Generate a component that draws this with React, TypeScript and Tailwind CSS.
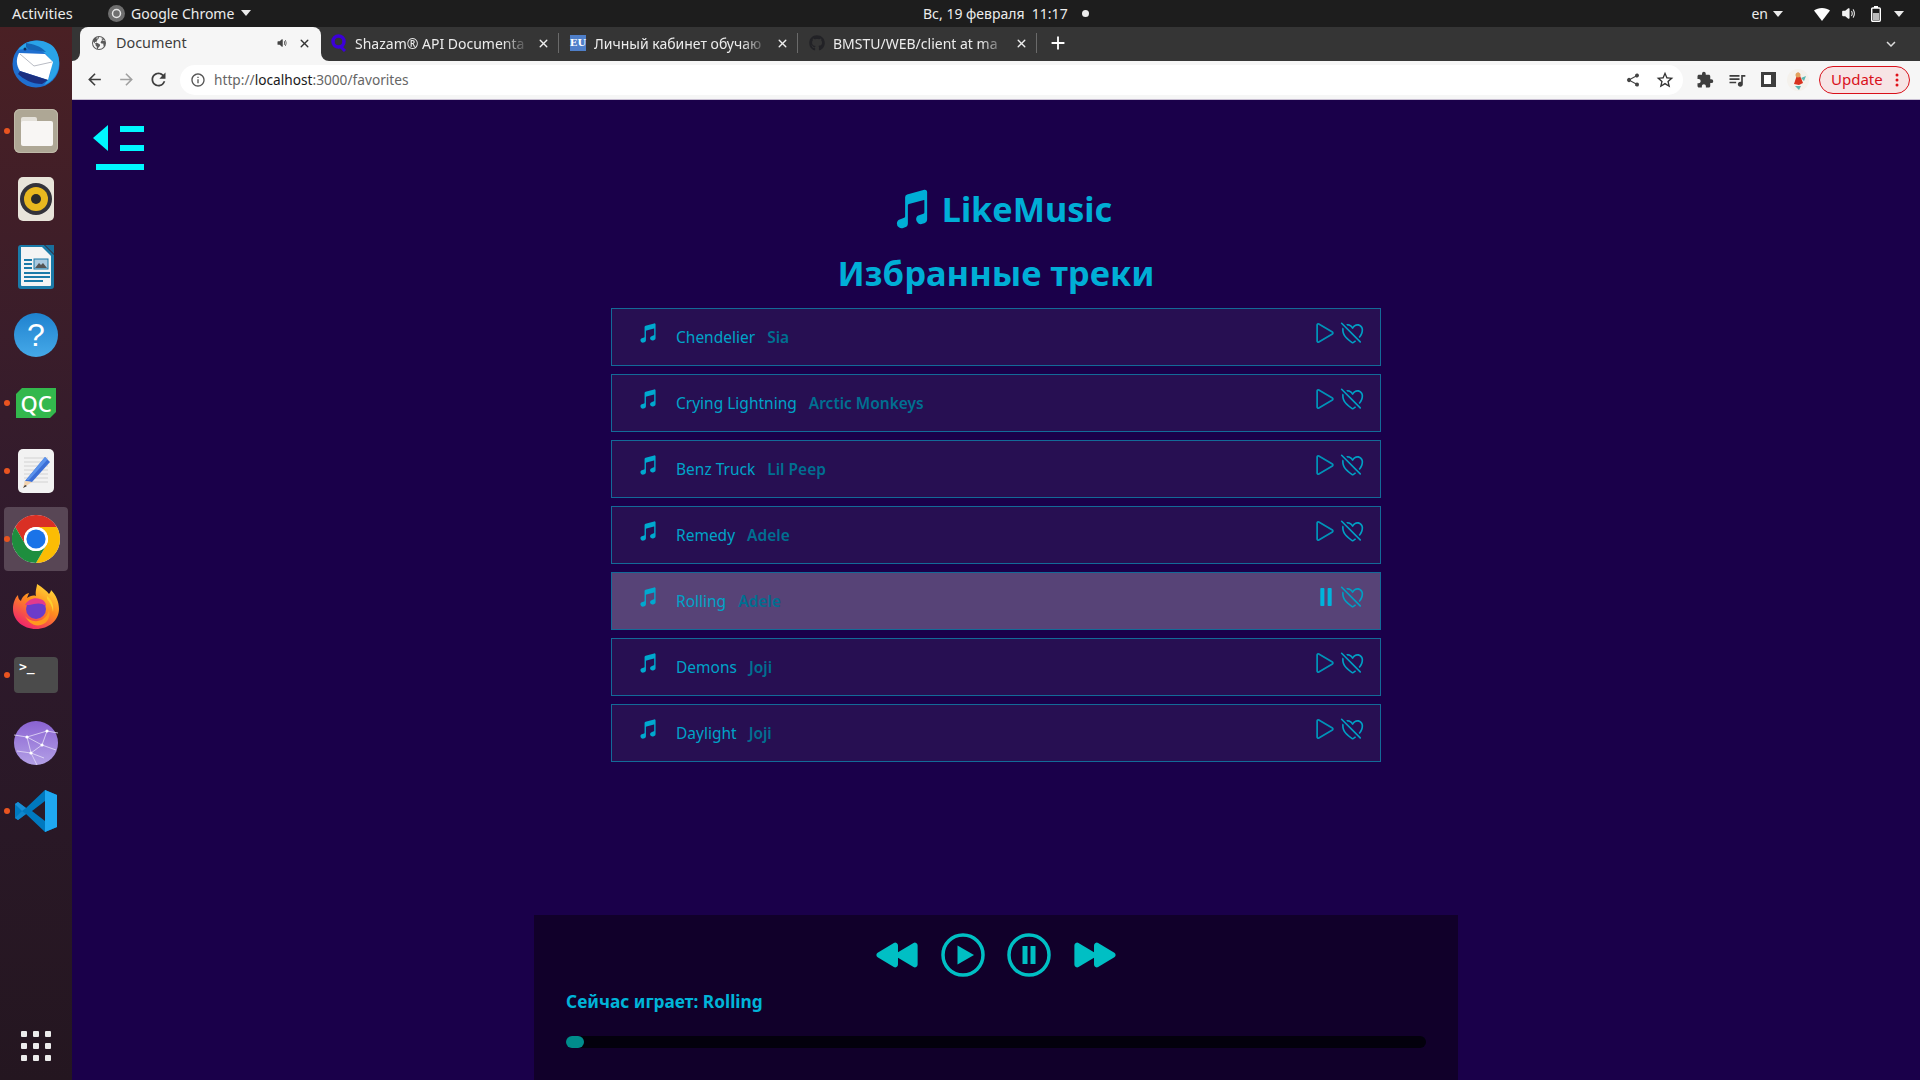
import React from "react";
import {
  IoMusicalNotes, IoPlayOutline, IoHeartDislikeOutline, IoPause, IoPlayBack, IoPlayForward,
  IoShareSocial, IoEarth, IoClose, IoVolumeMedium,
} from "react-icons/io5";
import { MdArrowBack, MdArrowForward, MdRefresh, MdInfoOutline, MdExtension, MdOutlineQueueMusic, MdExpandMore, MdAdd, MdOutlineStarBorder } from "react-icons/md";
import { FaGithub } from "react-icons/fa";

const tracks = [
  ["Chendelier", "Sia"],
  ["Crying Lightning", "Arctic Monkeys"],
  ["Benz Truck", "Lil Peep"],
  ["Remedy", "Adele"],
  ["Rolling", "Adele"],
  ["Demons", "Joji"],
  ["Daylight", "Joji"],
];

const Caret = ({ className = "" }: { className?: string }) => (
  <svg width="10" height="6" viewBox="0 0 10 6" className={className}><path d="M0 0h10L5 6z" fill="#ececec" /></svg>
);

const Dot = () => <span className="absolute left-[4px] top-1/2 -mt-[3px] h-[6px] w-[6px] rounded-full bg-[#e95420]" />;

function Thunderbird() {
  return (
    <svg width="48" height="50" viewBox="0 0 48 50">
      <circle cx="24" cy="26" r="23.5" fill="#1f6fd0" />
      <path d="M6 12C12 3 26 -1 38 6c8 5 11 16 8 26-2 7-8 13-14 15 5-6 9-14 6-24C35 14 26 10 16 11c-4 0-7 0-10 1z" fill="#2aa3e8" />
      <path d="M14 5c7 1 15 3 20 9l-14-2c-3 0-5-1-6-3z" fill="#1565b5" />
      <path d="M7 15 33 16 41 24 36 42 8 33C4 27 4 21 7 15z" fill="#fff" />
      <path d="M8 16 22 28 40 24" fill="none" stroke="#b9bcc4" strokeWidth="1" />
      <path d="M6 36c5 5 14 10 24 10l6-4L8 33z" fill="#1b2f80" />
      <circle cx="13" cy="11" r="1.5" fill="#0c2c5c" />
    </svg>
  );
}

function Files() {
  return (
    <div className="relative h-[44px] w-[44px] rounded-[6px] bg-[#aea795] shadow-[inset_0_0_0_1px_#bfb9a8]">
      <div className="absolute left-[7px] top-[8px] h-[8px] w-[16px] rounded-t-[2px] bg-[#e4e1da]" />
      <div className="absolute left-[7px] top-[12px] h-[25px] w-[32px] rounded-[2px] bg-[#f8f6f4]" />
    </div>
  );
}

function Rhythmbox() {
  return (
    <div className="flex h-[44px] w-[36px] items-center justify-center rounded-[5px] bg-[#e8e4da]">
      <div className="flex h-[32px] w-[32px] items-center justify-center rounded-full bg-[#33333a]">
        <div className="flex h-[24px] w-[24px] items-center justify-center rounded-full bg-[#e9b81f]">
          <div className="h-[10px] w-[10px] rounded-full bg-[#2a2a2a]" />
        </div>
      </div>
    </div>
  );
}

function Writer() {
  return (
    <svg width="36" height="46" viewBox="0 0 36 46">
      <path d="M3 1h23l10 10v31a3 3 0 0 1-3 3H3a3 3 0 0 1-3-3V4a3 3 0 0 1 3-3z" fill="#1a7aa8" />
      <path d="M3 3h21l9 9v29a1 1 0 0 1-1 1H4a1 1 0 0 1-1-1z" fill="#f4f4f4" />
      <path d="M27 1h9v9z" fill="#1a6f9c" />
      <path d="M6 15h8v2H6zM6 19h8v2H6zM6 23h8v2H6zM6 28h26v2H6zM6 32h26v2H6zM6 36h19v2H6z" fill="#1a7aa8" />
      <rect x="16" y="15" width="14" height="10" fill="#a9c9e0" stroke="#1a7aa8" />
      <path d="M17 24l4-5 2 2 2-2 4 5z" fill="#555" />
    </svg>
  );
}

function Help() {
  return (
    <div className="flex h-[44px] w-[44px] items-center justify-center rounded-full bg-gradient-to-b from-[#1e82cf] to-[#45a9e8] font-['Liberation_Sans',sans-serif] text-[32px] leading-none text-white">?</div>
  );
}

function QC() {
  return (
    <div className="flex h-[30px] w-[40px] items-center justify-center bg-[#33b84d] font-['Noto_Sans',sans-serif] text-[22px] font-medium leading-none text-white [clip-path:polygon(6px_0,100%_0,100%_calc(100%-6px),calc(100%-6px)_100%,0_100%,0_6px)]">QC</div>
  );
}

function Pencil() {
  return (
    <svg width="36" height="44" viewBox="0 0 36 44">
      <rect width="36" height="44" rx="5" fill="#f2f2f2" />
      <path d="M6 9h24M6 13h24M6 17h24M6 21h24M6 25h24M6 29h24M6 33h24" stroke="#d2d2d2" strokeWidth="1" />
      <path d="M27 8l5 5-18 20-7-1z" fill="#3c6fd6" />
      <path d="M27 8l2.5 2.5L11 31l-3 0z" fill="#5c93ec" />
      <path d="M7 32l7 1-9 6z" fill="#f3d3ae" />
      <path d="M5 39l2-3 2 1z" fill="#333" />
    </svg>
  );
}

function Chrome() {
  return (
    <svg width="48" height="48" viewBox="0 0 48 48">
      <circle cx="24" cy="24" r="24" fill="#fff" />
      <path d="M3.2 12A24 24 0 0 1 44.78 12H24a12 12 0 0 0-10.4 18z" fill="#d93025" />
      <path d="M44.78 12A24 24 0 0 1 24 48l10.4-18A12 12 0 0 0 24 12z" fill="#fbbc04" />
      <path d="M24 48A24 24 0 0 1 3.2 12L13.6 30a12 12 0 0 0 20.8 0z" fill="#1e8e3e" />
      <circle cx="24" cy="24" r="12" fill="#fff" />
      <circle cx="24" cy="24" r="9.6" fill="#1a73e8" />
    </svg>
  );
}

function Firefox() {
  return (
    <svg width="46" height="46" viewBox="0 0 46 46">
      <defs>
        <linearGradient id="ff1" x1="0.8" y1="0" x2="0.2" y2="1">
          <stop offset="0" stopColor="#ffe03a" />
          <stop offset="0.45" stopColor="#ff8a1f" />
          <stop offset="1" stopColor="#ee1a73" />
        </linearGradient>
      </defs>
      <path d="M23 45C10 45 0 36 0 25 0 19 2 14 5 11c0 3 1 5 3 6 1-4 4-7 8-8l-2 5c3-2 6-3 9-2C22 7 24 3 24 0c6 4 10 7 12 10 1-1 2-3 2-4 5 5 8 12 8 19 0 11-10 20-23 20z" fill="url(#ff1)" />
      <circle cx="23" cy="25" r="10" fill="#6b3cc9" />
      <path d="M12 21c3-6 10-8 15-6 4 1 6 4 6 7-4-3-8-3-12-2-3 1-6 1-9 1z" fill="#e23a8d" />
      <path d="M12 32c4 5 12 7 18 3 3-2 5-5 6-9 2 6-1 13-8 15-7 2-13-3-16-9z" fill="#ff9a1e" />
      <path d="M34 12c5 4 7 9 6 16-1-6-3-10-6-13z" fill="#ffd02e" />
    </svg>
  );
}

function Terminal() {
  return (
    <div className="flex h-[36px] w-[44px] rounded-[4px] bg-[#4b4b4b] pl-[5px] pt-[3px] font-['DejaVu_Sans_Mono',monospace] text-[13px] font-bold leading-[14px] text-white">&gt;_</div>
  );
}

function Globe() {
  return (
    <svg width="44" height="44" viewBox="0 0 44 44">
      <defs>
        <linearGradient id="g1" x1="0" y1="0" x2="0" y2="1">
          <stop offset="0" stopColor="#8a63d2" />
          <stop offset="1" stopColor="#b3a0e6" />
        </linearGradient>
      </defs>
      <circle cx="22" cy="22" r="22" fill="url(#g1)" />
      <path d="M0 14l13 2 20-6 11 2M13 16l15 8 14 5M13 16l4 16 6 12M33 10l-5 14-11 8-14-2M17 32l13 5" fill="none" stroke="#e6def8" strokeWidth="0.8" />
      <circle cx="13" cy="16" r="1.6" fill="#fff" /><circle cx="33" cy="10" r="1.6" fill="#fff" /><circle cx="28" cy="24" r="1.6" fill="#fff" /><circle cx="17" cy="32" r="1.6" fill="#fff" />
    </svg>
  );
}

function VSCode() {
  return (
    <svg width="44" height="44" viewBox="0 0 44 44">
      <path d="M31 1 12 19 4 13 1 15v14l3 2 8-6 19 18 12-5V6z" fill="#0079bf" />
      <path d="M31 1 43 6v32l-12 5z" fill="#1fa8f1" />
      <path d="M31 12 18 22l13 10z" fill="#2b1a26" />
      <path d="M1 15l3-2 8 6-4 3z" fill="#1a8fd6" />
      <path d="M1 29l3 2 8-6-4-3z" fill="#0f86cc" />
    </svg>
  );
}

const dock: [React.ReactNode, boolean][] = [
  [<Thunderbird />, false],
  [<Files />, true],
  [<Rhythmbox />, false],
  [<Writer />, false],
  [<Help />, false],
  [<QC />, true],
  [<Pencil />, true],
  [<Chrome />, true],
  [<Firefox />, false],
  [<Terminal />, true],
  [<Globe />, false],
  [<VSCode />, true],
];

function Dock() {
  return (
    <div className="flex h-full w-[72px] shrink-0 flex-col bg-gradient-to-b from-[#4a2024] via-[#2f1a2d] to-[#241620] pt-[2px]">
      {dock.map(([icon, dot], i) => (
        <div key={i} className="relative flex h-[68px] items-center justify-center">
          {i === 7 && <div className="absolute inset-x-[4px] inset-y-[2px] rounded-[4px] bg-[#584655]" />}
          {dot && <Dot />}
          <div className="relative">{icon}</div>
        </div>
      ))}
      <div className="mt-auto mb-[19px] grid w-full grid-cols-[6px_6px_6px] justify-center gap-x-[6px] gap-y-[6px]">
        {Array.from({ length: 9 }).map((_, i) => (
          <span key={i} className="h-[6px] w-[6px] rounded-[1px] bg-[#ececec]" />
        ))}
      </div>
    </div>
  );
}

function TopBar() {
  return (
    <div className="flex h-[27px] items-center bg-[#1d1d1d] font-['Noto_Sans',sans-serif] text-[14px] text-[#ececec]">
      <div className="flex w-[923px] shrink-0 items-center">
        <span className="ml-[12px] w-[87px] text-[14.6px]">Activities</span>
        <svg width="17" height="17" viewBox="0 0 17 17" className="mr-[6px] ml-[9px]">
          <circle cx="8.500" cy="8.500" r="8.500" fill="#6f6f6f" />
          <circle cx="8.500" cy="8.500" r="4" fill="none" stroke="#e6e6e6" strokeWidth="1.500" />
        </svg>
        <span>Google Chrome</span>
        <Caret className="ml-[7px]" />
      </div>
      <span className="w-[146px]">Вс, 19 февраля&nbsp;&nbsp;11:17</span>
      <span className="ml-[13px] h-[7px] w-[7px] rounded-full bg-[#ececec]" />
      <div className="ml-auto flex items-center">
        <span>en</span>
        <Caret className="ml-[5px]" />
        <svg width="16" height="14" viewBox="0 0 16 14" className="ml-[31px]">
          <path d="M0 3.500C4 0 12 0 16 3.500L8 14z" fill="#fff" />
        </svg>
        <IoVolumeMedium className="ml-[10px] text-[#f2f2f2]" size={17} />
        <svg width="10" height="16" viewBox="0 0 10 16" className="ml-[14px]">
          <path d="M3 0h4v2H3z" fill="#fff" />
          <rect x="0.700" y="2" width="8.600" height="13.300" rx="1" fill="none" stroke="#fff" strokeWidth="1.400" />
          <rect x="2" y="7" width="6" height="7" fill="#bbb" />
        </svg>
        <Caret className="ml-[13px] mr-[16px]" />
      </div>
    </div>
  );
}

const tabs = [
  { t: "Shazam® API Documenta", i: (
    <svg width="16" height="18" viewBox="0 0 16 18"><circle cx="7.500" cy="7.500" r="5.500" fill="none" stroke="#3c00d8" strokeWidth="3.500" /><path d="M9 12l5 5" stroke="#3c00d8" strokeWidth="3" /></svg>
  ) },
  { t: "Личный кабинет обучаю", i: (
    <div className="flex h-[16px] w-[16px] items-center justify-center bg-[#4f7fc9] font-['DejaVu_Serif',serif] text-[10px] font-bold leading-none text-white">EU</div>
  ) },
  { t: "BMSTU/WEB/client at ma", i: <FaGithub size={16} className="text-[#222226]" /> },
];

function TabStrip() {
  return (
    <div className="flex h-[34px] items-end bg-[#353535] pl-[8px] font-['Noto_Sans',sans-serif] text-[14px]">
      <div className="relative flex h-[34px] w-[241px] items-center rounded-t-[8px] bg-[#f6f6f6] pb-[2px] pl-[11px] text-[14.4px] text-[#3d3d3d]">
        <svg width="8" height="8" viewBox="0 0 8 8" className="absolute -left-[8px] bottom-0"><path d="M8 0v8H0a8 8 0 0 0 8-8z" fill="#f6f6f6" /></svg>
        <svg width="8" height="8" viewBox="0 0 8 8" className="absolute -right-[8px] bottom-0"><path d="M0 0v8h8a8 8 0 0 1-8-8z" fill="#f6f6f6" /></svg>
        <IoEarth size={16} className="text-[#5a5a5a]" />
        <span className="ml-[9px] w-[160px]">Document</span>
        <IoVolumeMedium size={12} className="text-[#444]" />
        <IoClose size={15} className="ml-[9px] text-[#333]" />
      </div>
      {tabs.map((tab, i) => (
        <div key={i} className="flex h-[34px] w-[239px] items-center pb-[2px] pl-[10px] text-[#ececec]">
          <div className="flex w-[16px] shrink-0 justify-center">{tab.i}</div>
          <span className="ml-[8px] w-[174px] shrink-0 whitespace-nowrap [mask-image:linear-gradient(90deg,#000_85%,transparent)]">{tab.t}</span>
          <IoClose size={15} className="ml-[7px] shrink-0 text-[#eee]" />
          <span className="ml-[7px] h-[20px] w-px shrink-0 bg-[#6a6a6a]" />
        </div>
      ))}
      <MdAdd size={22} className="mb-[7px] ml-[9px] text-white" />
      <MdExpandMore size={18} className="mb-[8px] ml-auto mr-[20px] text-[#ddd]" />
    </div>
  );
}

function Toolbar() {
  return (
    <div className="flex h-[39px] items-center border-b border-[#c9bfd3] bg-[#f6f6f6] pb-px font-['Noto_Sans',sans-serif] text-[#3e3e3e]">
      <MdArrowBack size={19} className="ml-[13px]" />
      <MdArrowForward size={19} className="ml-[13px] text-[#a0a0a0]" />
      <MdRefresh size={21} className="ml-[12px]" />
      <div className="ml-[11px] flex h-[30px] w-[1503px] items-center rounded-full bg-white pl-[10px]">
        <MdInfoOutline size={16} className="text-[#555]" />
        <span className="ml-[8px] pt-[1px] text-[13.7px] text-[#666]"><span>http://</span><span className="text-[#1a1a1a]">localhost</span>:3000/favorites</span>
        <IoShareSocial size={16} className="ml-auto text-[#444]" />
        <MdOutlineStarBorder size={20} className="ml-[14px] mr-[8px] text-[#333]" />
      </div>
      <MdExtension size={18} className="ml-[13px]" />
      <MdOutlineQueueMusic size={20} className="ml-[13px]" />
      <div className="ml-[14px] flex h-[15px] w-[15px] justify-end border-[3px] border-[#3e3e3e] bg-white"><span className="h-full w-[2px] bg-[#3e3e3e]" /></div>
      <svg width="22" height="22" viewBox="0 0 22 22" className="ml-[11px]">
        <circle cx="11" cy="11" r="11" fill="#f4f1ec" />
        <path d="M11 3l3 6 2 5-4 2-5-1 2-6z" fill="#d8321e" />
        <circle cx="11" cy="6" r="2.500" fill="#e2a15b" />
        <path d="M14 9l5-2-2 5zM8 17l6 0-2 4z" fill="#5cb6b0" />
      </svg>
      <div className="ml-[10px] flex h-[28px] w-[91px] items-center rounded-full border border-[#d9101a] bg-[#f7e4e5] pl-[11px] text-[15px] font-normal text-[#d9101a]">
        Update
        <svg width="4" height="14" viewBox="0 0 4 14" className="ml-[12px]"><circle cx="2" cy="2" r="1.500" fill="#e01018" /><circle cx="2" cy="7" r="1.500" fill="#e01018" /><circle cx="2" cy="12" r="1.500" fill="#e01018" /></svg>
      </div>
    </div>
  );
}

function Row({ title, artist, active }: { title: string; artist: string; active: boolean }) {
  return (
    <div className={`flex h-[58px] w-[770px] items-center border border-[#136a98] pl-[28px] pr-[15px] ${active ? "bg-[#574377]" : "bg-[#270f52]"}`}>
      <IoMusicalNotes size={22} className="-mt-[8px] -ml-[3px] text-[#00a9cf]" />
      <span className="ml-[17px] pt-[2px] text-[15.5px] text-[#00a3c8]">{title}</span>
      <span className="ml-[12px] pt-[2px] text-[15.5px] font-semibold text-[#006f91]">{artist}</span>
      <div className="-mt-[8px] ml-auto flex items-center">
        {active ? (
          <IoPause size={26} className="text-[#00b4dc]" />
        ) : (
          <IoPlayOutline size={28} className="text-[#0093b8]" />
        )}
        <IoHeartDislikeOutline size={26} className="text-[#00a0c4]" />
      </div>
    </div>
  );
}

function PlayerCircle({ pause }: { pause?: boolean }) {
  return (
    <svg width="44" height="44" viewBox="0 0 44 44">
      <circle cx="22" cy="22" r="20" fill="none" stroke="currentColor" strokeWidth="3.500" />
      {pause ? (
        <path d="M15.500 13h5v18h-5zM23.500 13h5v18h-5z" fill="currentColor" />
      ) : (
        <path d="M16.500 12.500 33 22 16.500 31.500z" fill="currentColor" />
      )}
    </svg>
  );
}

function Page() {
  return (
    <div className="flex min-h-0 flex-1 flex-col items-center overflow-hidden bg-[#1a004a] font-['Noto_Sans',sans-serif]">
      <div className="w-full pl-[21px] pt-[25px]">
        <svg width="52" height="45" viewBox="0 0 52 45" className="block">
          <path d="M15 0v26L0 13z" fill="#00f7ff" />
          <path d="M27 1h24v6H27zM27 20h24v6H27zM3 39h48v6H3z" fill="#00f7ff" />
        </svg>
      </div>
      <div className="mt-[17px] ml-[10px] flex items-center text-[#00aed6]">
        <IoMusicalNotes size={44} />
        <span className="ml-[8px] text-[34.2px] font-bold leading-[44px]">LikeMusic</span>
      </div>
      <h1 className="mt-[20px] text-[34.5px] font-bold leading-[44px] text-[#00aed6]">Избранные треки</h1>
      <div className="mt-[13px] flex flex-col gap-[8px]">
        {tracks.map(([t, a]) => (
          <Row key={t} title={t} artist={a} active={t === "Rolling"} />
        ))}
      </div>
      <div className="mt-auto flex h-[165px] w-[924px] shrink-0 flex-col bg-[#11002a] px-[32px] pt-[18px]">
        <div className="flex items-center justify-center gap-[22px] text-[#00bfc4]">
          <IoPlayBack size={44} />
          <PlayerCircle />
          <PlayerCircle pause />
          <IoPlayForward size={44} />
        </div>
        <div className="mt-[12px] text-[17.3px] font-bold leading-[26px] text-[#00b4d8]">Сейчас играет: Rolling</div>
        <div className="mt-[21px] h-[12px] w-[860px] rounded-full bg-[#03000c]">
          <div className="h-[12px] w-[18px] rounded-full bg-[#008c8c]" />
        </div>
      </div>
    </div>
  );
}

export default function App() {
  return (
    <div className="flex h-screen w-screen flex-col overflow-hidden">
      <TopBar />
      <div className="flex min-h-0 flex-1">
        <Dock />
        <div className="flex min-w-0 flex-1 flex-col">
          <TabStrip />
          <Toolbar />
          <Page />
        </div>
      </div>
    </div>
  );
}
